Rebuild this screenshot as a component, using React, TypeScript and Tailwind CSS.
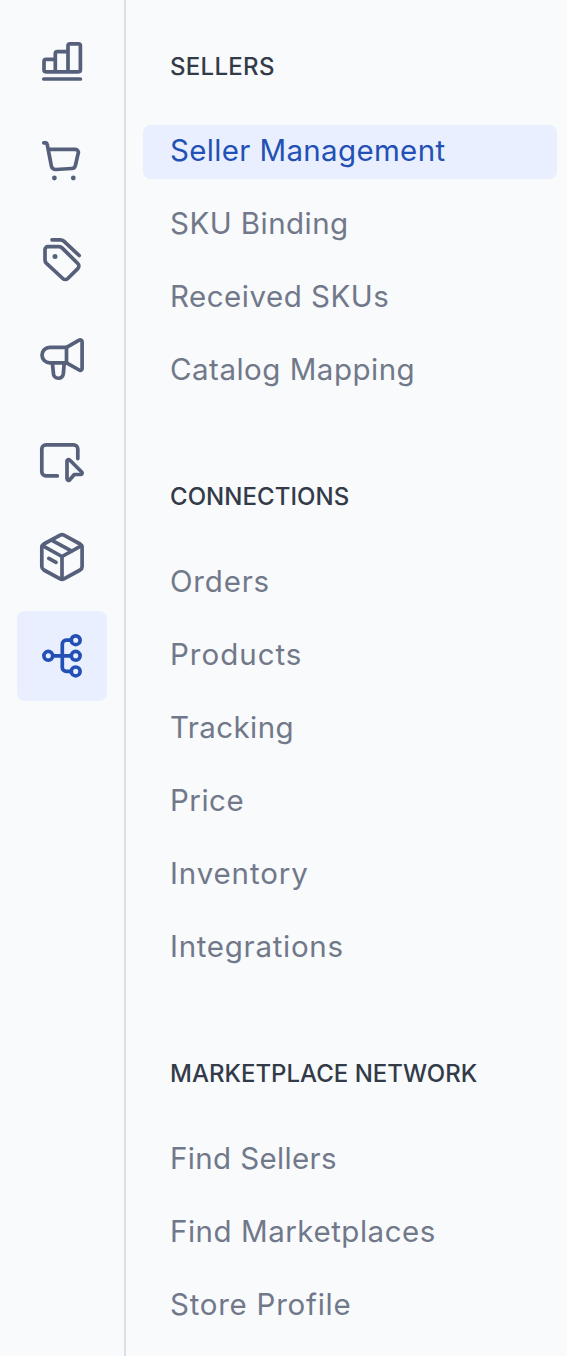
import type { ReactNode } from "react";

type Item = { label: string; tracking: string; active?: boolean };
type Section = { title: string; heading: string; items: Item[] };

const sections: Section[] = [
  {
    title: "SELLERS",
    heading: "leading-[32px] tracking-[0.3px]",
    items: [
      { label: "Seller Management", tracking: "tracking-[0.34px]", active: true },
      { label: "SKU Binding", tracking: "tracking-[0.45px]" },
      { label: "Received SKUs", tracking: "tracking-[0.5px]" },
      { label: "Catalog Mapping", tracking: "tracking-[0.5px]" },
    ],
  },
  {
    title: "CONNECTIONS",
    heading: "leading-[30px] tracking-[0.05px]",
    items: [
      { label: "Orders", tracking: "tracking-[0.8px]" },
      { label: "Products", tracking: "tracking-[1px]" },
      { label: "Tracking", tracking: "tracking-[0.4px]" },
      { label: "Price", tracking: "tracking-[0.5px]" },
      { label: "Inventory", tracking: "tracking-[0.87px]" },
      { label: "Integrations", tracking: "tracking-[0.72px]" },
    ],
  },
  {
    title: "MARKETPLACE NETWORK",
    heading: "leading-[30px] tracking-[0px]",
    items: [
      { label: "Find Sellers", tracking: "tracking-[0.36px]" },
      { label: "Find Marketplaces", tracking: "tracking-[0.53px]" },
      { label: "Store Profile", tracking: "tracking-[0.75px]" },
    ],
  },
];

const icons: { name: string; viewBox: string; active?: boolean; art: ReactNode }[] = [
  {
    name: "Analytics",
    viewBox: "0 0 64 64",
    art: (
      <>
        <path d="M16 29.4h9.3v12.4H16a2 2 0 0 1-2-2v-8.4a2 2 0 0 1 2-2ZM27.3 21.6H38v20.2H25.3V23.6a2 2 0 0 1 2-2ZM40 13.8h8.4a2 2 0 0 1 2 2v24a2 2 0 0 1-2 2H38v-26a2 2 0 0 1 2-2Z" />
        <path d="M13.8 49h36.6" />
      </>
    ),
  },
  {
    name: "Orders",
    viewBox: "0 -1 64 64",
    art: (
      <>
        <path d="M13.8 12.8h2.1a1.2 1.2 0 0 1 1.2 1l4.3 22.4a4 4 0 0 0 4.2 3.3l16.2-1a4 4 0 0 0 3.6-3l2.8-12.3a3 3 0 0 0-2.9-3.8H18.4" />
        <circle cx="24.4" cy="48" r="2.4" fill="currentColor" stroke="none" />
        <circle cx="43.3" cy="48" r="2.4" fill="currentColor" stroke="none" />
      </>
    ),
  },
  {
    name: "Pricing",
    viewBox: "0 0 64 64",
    art: (
      <>
        <path d="M22 11.8h8.3a5 5 0 0 1 3.5 1.4l15.4 14.3" />
        <path d="M18 18.6h10.8a5 5 0 0 1 3.5 1.5l15.5 15.4a3.6 3.6 0 0 1 0 5.1l-10 9.9a3.6 3.6 0 0 1-5 0L16.5 35.4a5 5 0 0 1-1.5-3.5V21.6a3 3 0 0 1 3-3Z" />
        <circle cx="25" cy="28.4" r="2.5" fill="currentColor" stroke="none" />
      </>
    ),
  },
  {
    name: "Marketing",
    viewBox: "0 -1 64 64",
    art: (
      <>
        <path d="M36.5 19.4H19.7a7.7 7.7 0 0 0 0 15.4h16.8l12.7 7.2a1.9 1.9 0 0 0 2.9-1.6V13.7a1.9 1.9 0 0 0-2.9-1.6l-12.7 7.3Z" />
        <path d="M36.5 19.4v15.4M22.4 35l1 10.2a5 5 0 0 0 10 .1L34.2 35" />
      </>
    ),
  },
  {
    name: "Storefront",
    viewBox: "0 -4 64 64",
    art: (
      <>
        <path d="M27.3 45.9H16a4.2 4.2 0 0 1-4.2-4.2V19a4.2 4.2 0 0 1 4.2-4.2h27.6a4.2 4.2 0 0 1 4.2 4.2v9.6" />
        <path d="M37 31.2v17.6a1.6 1.6 0 0 0 2.8 1l4.5-5.3 6.5-.1a1.4 1.4 0 0 0 .9-2.4L39.7 30a1.6 1.6 0 0 0-2.7 1.2Z" />
      </>
    ),
  },
  {
    name: "Inventory",
    viewBox: "0 0 64 64",
    art: (
      <>
        <path d="M30.2 10.2 13.8 19a4 4 0 0 0-2 3.5v19.1a4 4 0 0 0 2 3.4l16.4 8.8a4 4 0 0 0 3.7 0L50.1 45a4 4 0 0 0 2-3.4V22.5a4 4 0 0 0-2-3.5l-16.2-8.8a4 4 0 0 0-3.7 0Z" />
        <path d="M12.4 20.6 32 31.5l19.6-10.9M32 31.5v22M22 15.4l19.8 10.8M18.8 33.4l7.2 4" />
      </>
    ),
  },
  {
    name: "Connections",
    viewBox: "0 0 64 64",
    active: true,
    art: (
      <>
        <circle cx="18.3" cy="31.8" r="4.4" />
        <circle cx="45.7" cy="16.2" r="4.4" />
        <circle cx="45.7" cy="31.8" r="4.4" />
        <circle cx="45.7" cy="47.4" r="4.4" />
        <path d="M22.7 31.8h18.6M41.3 16.2h-5a4 4 0 0 0-4 4v23.2a4 4 0 0 0 4 4h5" />
      </>
    ),
  },
];

export default function App() {
  return (
    <div className="flex h-[1356px] w-[567px] overflow-hidden bg-[#f8fafc] font-['Inter','Liberation_Sans',sans-serif]">
      <nav className="flex w-[126px] shrink-0 flex-col gap-[9px] border-r-2 border-[#dcdfe5] pt-[17px] pl-[17px]">
        {icons.map((icon) => (
          <a
            key={icon.name}
            aria-label={icon.name}
            className={`flex size-[90px] shrink-0 items-center justify-center rounded-lg ${icon.active ? "bg-[#e9effe] text-[#2350b5]" : "text-[#56607a]"}`}
          >
            <svg
              viewBox={icon.viewBox}
              className="size-16"
              fill="none"
              stroke="currentColor"
              strokeWidth="3.7"
              strokeLinecap="round"
              strokeLinejoin="round"
            >
              {icon.art}
            </svg>
          </a>
        ))}
      </nav>
      <aside className="flex grow flex-col gap-[84px] pt-[51px] pr-[10px] pl-[17px]">
        {sections.map((section) => (
          <section key={section.title} className="flex flex-col gap-11">
            <h2 className={`h-[30px] pl-[27px] text-[24px] font-medium whitespace-nowrap text-[#333a48] ${section.heading}`}>
              {section.title}
            </h2>
            <ul className="flex flex-col gap-[19px]">
              {section.items.map((item) => (
                <li
                  key={item.label}
                  className={`h-[54px] rounded-lg pl-[27px] text-[29.5px] leading-[50px] whitespace-nowrap ${item.tracking} ${item.active ? "bg-[#e9effe] text-[#2350b5]" : "text-[#717889]"}`}
                >
                  {item.label}
                </li>
              ))}
            </ul>
          </section>
        ))}
      </aside>
    </div>
  );
}
